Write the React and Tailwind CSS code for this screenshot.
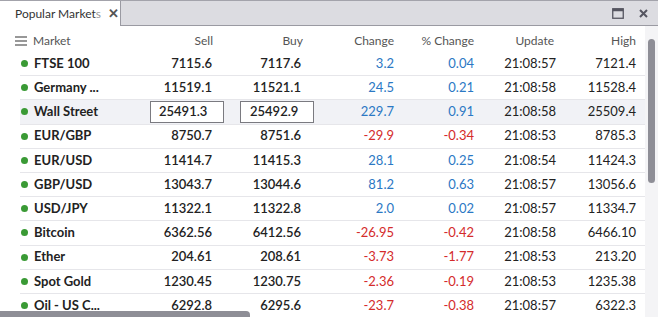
import React from 'react';

const rows = [
  { name: 'FTSE 100', sell: '7115.6', buy: '7117.6', chg: '3.2', pct: '0.04', time: '21:08:57', high: '7121.4' },
  { name: 'Germany ...', sell: '11519.1', buy: '11521.1', chg: '24.5', pct: '0.21', time: '21:08:58', high: '11528.4' },
  { name: 'Wall Street', sell: '25491.3', buy: '25492.9', chg: '229.7', pct: '0.91', time: '21:08:58', high: '25509.4', active: true },
  { name: 'EUR/GBP', sell: '8750.7', buy: '8751.6', chg: '-29.9', pct: '-0.34', time: '21:08:53', high: '8785.3' },
  { name: 'EUR/USD', sell: '11414.7', buy: '11415.3', chg: '28.1', pct: '0.25', time: '21:08:54', high: '11424.3' },
  { name: 'GBP/USD', sell: '13043.7', buy: '13044.6', chg: '81.2', pct: '0.63', time: '21:08:57', high: '13056.6' },
  { name: 'USD/JPY', sell: '11322.1', buy: '11322.8', chg: '2.0', pct: '0.02', time: '21:08:57', high: '11334.7' },
  { name: 'Bitcoin', sell: '6362.56', buy: '6412.56', chg: '-26.95', pct: '-0.42', time: '21:08:58', high: '6466.10' },
  { name: 'Ether', sell: '204.61', buy: '208.61', chg: '-3.73', pct: '-1.77', time: '21:08:53', high: '213.20' },
  { name: 'Spot Gold', sell: '1230.45', buy: '1230.75', chg: '-2.36', pct: '-0.19', time: '21:08:53', high: '1235.38' },
  { name: 'Oil - US C...', sell: '6292.8', buy: '6295.6', chg: '-23.7', pct: '-0.38', time: '21:08:57', high: '6322.3' },
];

export default function App() {
  return (
    <div className="relative w-[658px] h-[317px] overflow-hidden bg-white flex flex-col" style={{ fontFamily: 'Lato, "Open Sans", sans-serif' }}>
      {/* barra de pestañas */}
      <div className="h-[26px] shrink-0 flex border-t border-[#a3a3ab] bg-[#dcdce1] border-b border-b-[#9a9aa2]">
        <div className="w-[121px] h-[25px] bg-white flex items-center pl-[15px] border-r border-[#9a9aa2] text-[12px] text-[#333]">
          <span>Popular Market<span className="text-[#999]">s</span></span>
          <span className="ml-[7px] text-[#555] text-[13px] font-bold leading-none">✕</span>
        </div>
        <div className="flex-1" />
        <div className="flex items-center gap-[15px] pr-[10px]">
          <svg width="12" height="11" viewBox="0 0 12 11">
            <rect x="0.75" y="0.75" width="10.5" height="9.5" fill="none" stroke="#555560" strokeWidth="1.3" />
            <rect x="0.75" y="0.75" width="10.5" height="2.5" fill="#555560" />
          </svg>
          <svg width="9" height="9" viewBox="0 0 9 9">
            <path d="M1 1L8 8M8 1L1 8" stroke="#555560" strokeWidth="2" />
          </svg>
        </div>
      </div>

      <div className="flex flex-1 min-h-0">
        <div className="w-[645px] flex flex-col">
          {/* cabecera */}
          <div className="h-[26px] pt-[7px] flex items-start text-[12px] leading-[16px] text-[#555] shrink-0">
            <div className="w-[130px] flex items-center pl-[15px]">
              <svg width="12" height="10" viewBox="0 0 12 10" className="mr-[6px]">
                <path d="M0 1H12M0 5H12M0 9H12" stroke="#777" strokeWidth="1.3" />
              </svg>
              Market
            </div>
            <div className="w-[83px] text-right">Sell</div>
            <div className="w-[90px] text-right">Buy</div>
            <div className="w-[91px] text-right">Change</div>
            <div className="w-[80px] text-right">% Change</div>
            <div className="w-[82px] text-right pr-[2px]">Update</div>
            <div className="w-[80px] text-right">High</div>
          </div>

          {rows.map(r => {
            const neg = r.chg.startsWith('-');
            const color = neg ? 'text-[#d42b2b]' : 'text-[#2b78c4]';
            return (
              <div key={r.name} className={`h-[24.2px] shrink-0 ml-[20px] flex items-center text-[13px] border-b border-[#e6e6ea] ${r.active ? 'bg-[#f1f2f6]' : ''}`}>
                <div className="w-[110px] flex items-center font-bold text-[#222]">
                  <span className="w-[7px] h-[7px] rounded-full bg-[#3a9a35] ml-[1px] mr-[6px]" />
                  {r.name}
                </div>
                {r.active ? (
                  <>
                    <div className="w-[82px] flex">
                      <div className="ml-[20px] w-[74px] h-[22px] shrink-0 border border-[#7a7a80] bg-white flex items-center pl-[8px] font-semibold text-[#222]">{r.sell}</div>
                    </div>
                    <div className="w-[89px] flex">
                      <div className="ml-[28px] w-[74px] h-[22px] shrink-0 border border-[#7a7a80] bg-white flex items-center pl-[9px] font-semibold text-[#222]">{r.buy}</div>
                    </div>
                  </>
                ) : (
                  <>
                    <div className="w-[82px] text-right font-semibold text-[#222]">{r.sell}</div>
                    <div className="w-[89px] text-right font-semibold text-[#222]">{r.buy}</div>
                  </>
                )}
                <div className={`w-[93px] text-right ${color}`}>{r.chg}</div>
                <div className={`w-[80px] text-right ${color}`}>{r.pct}</div>
                <div className="w-[82px] text-right text-[#222]">{r.time}</div>
                <div className="w-[80px] text-right text-[#222]">{r.high}</div>
              </div>
            );
          })}
        </div>
        {/* barra de desplazamiento vertical */}
        <div className="flex-1 bg-[#f4f4f6] flex justify-center pt-[13px]">
          <div className="w-[7px] h-[144px] rounded-full bg-[#8e8e96]" />
        </div>
      </div>
      {/* barra horizontal */}
      <div className="absolute left-0 bottom-0 w-[250px] h-[6px] rounded-tr-[4px] bg-[#8e8e96]" />
    </div>
  );
}
